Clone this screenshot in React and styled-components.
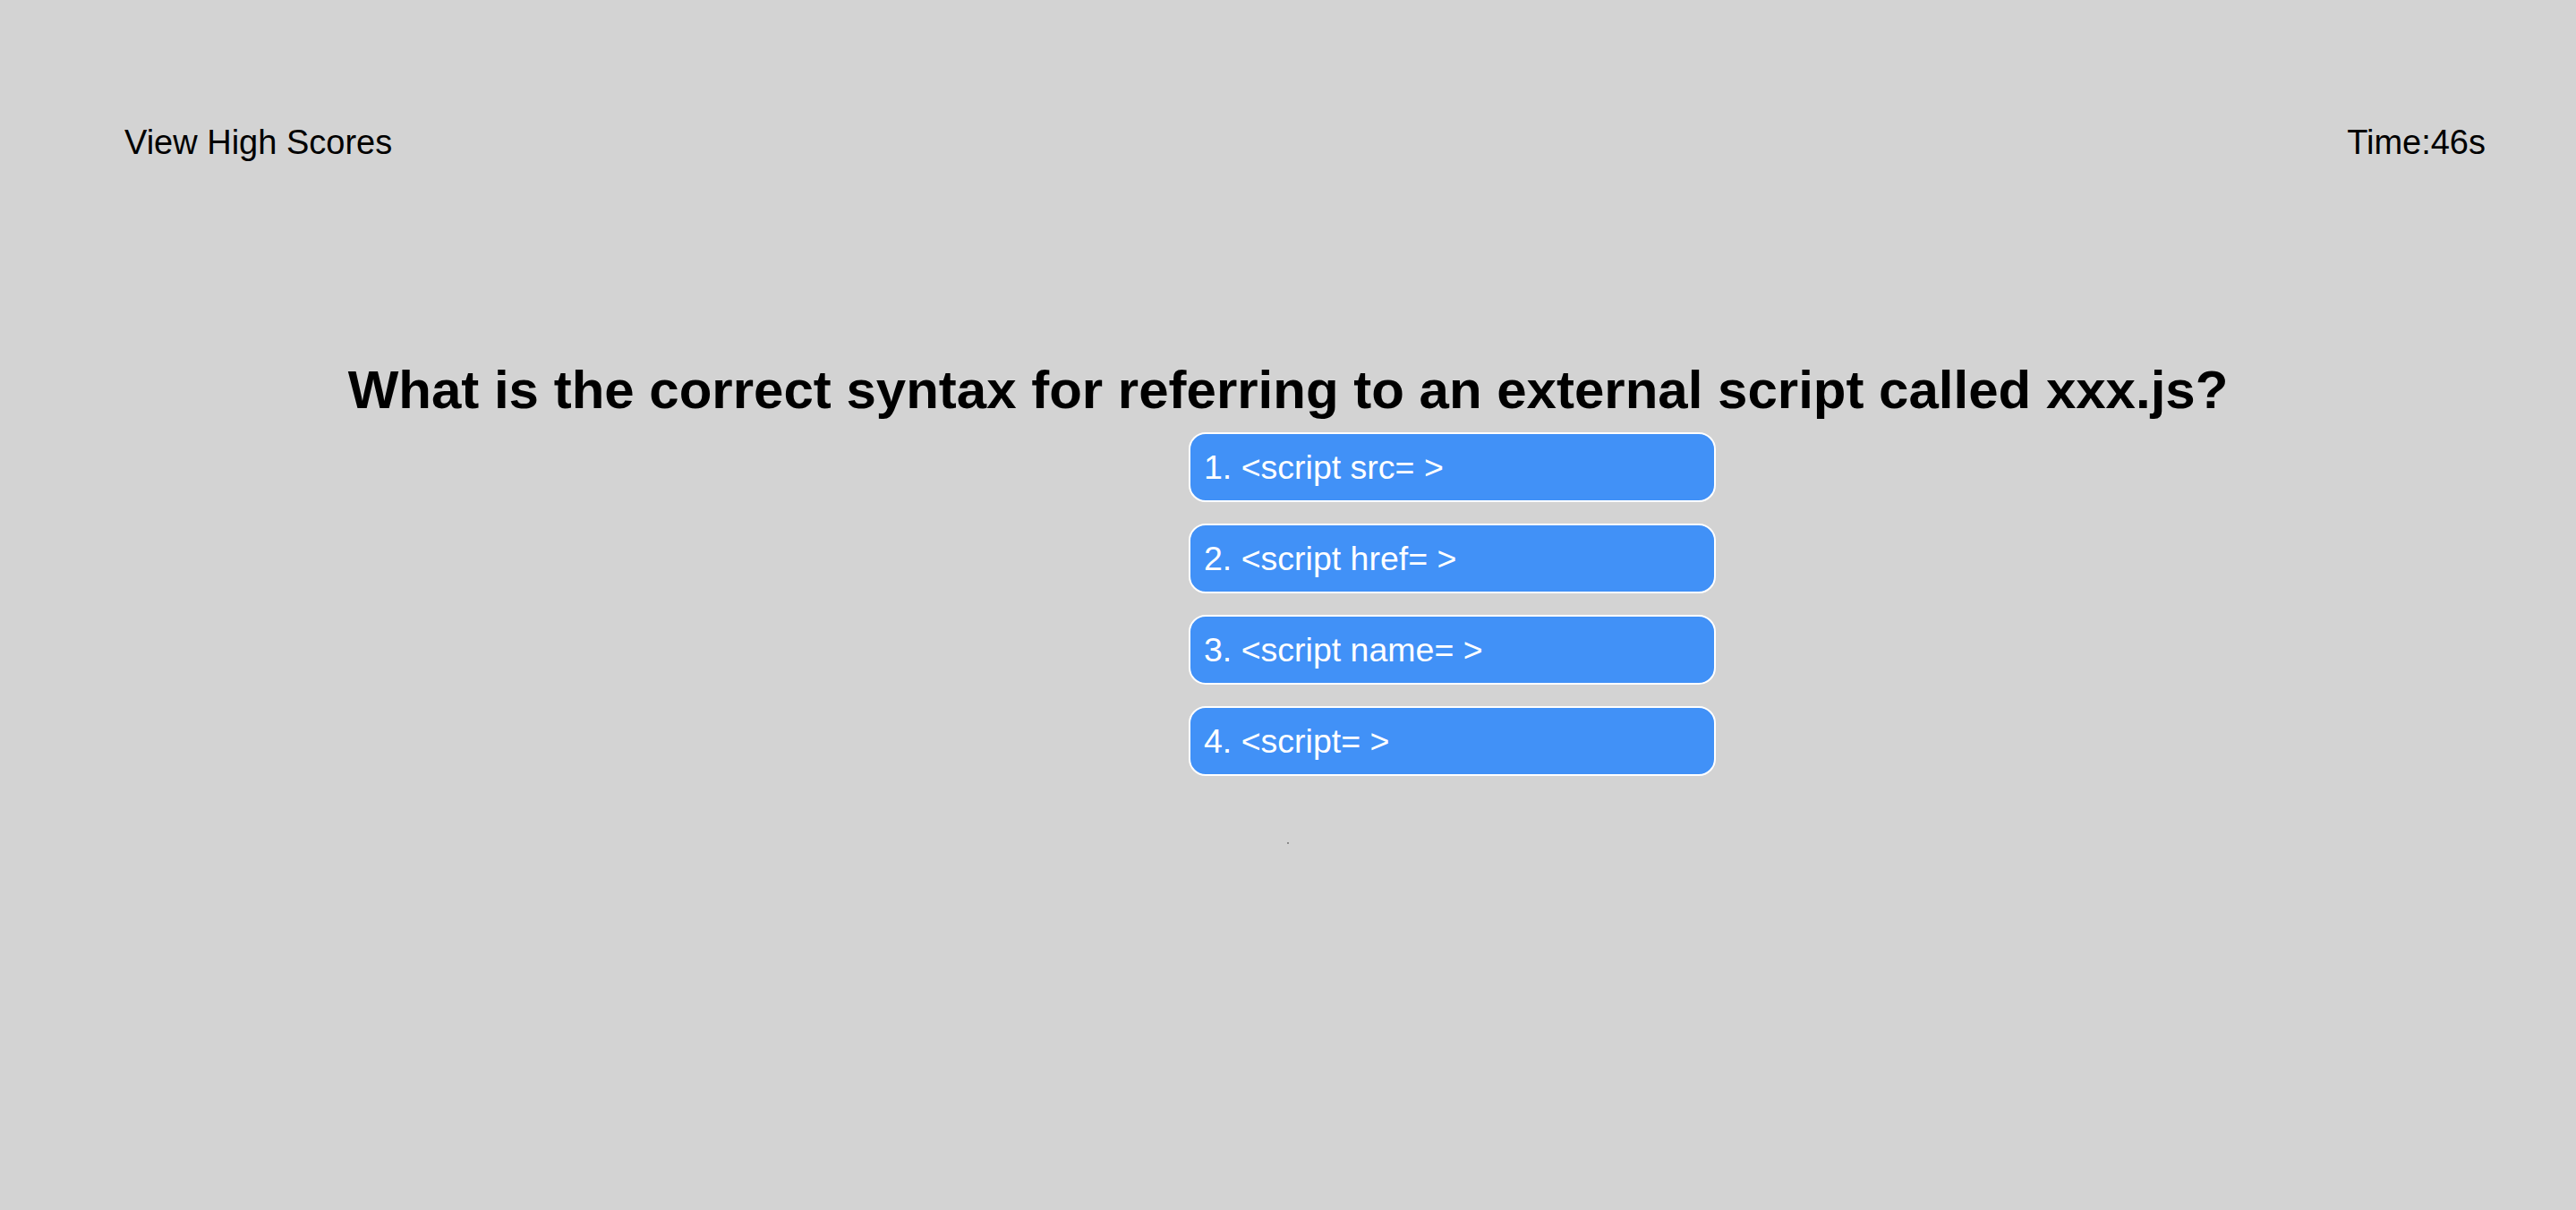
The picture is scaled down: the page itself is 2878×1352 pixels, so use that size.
import styled, { createGlobalStyle } from "styled-components";

const GlobalStyle = createGlobalStyle`
  html, body {
    margin: 0;
    padding: 0;
    background: #d3d3d3;
    font-family: "Liberation Sans", Arial, sans-serif;
    color: #000;
  }
`;

const Page = styled.div`
  min-height: 1352px;
  background: #d3d3d3;
`;

const Header = styled.header`
  display: flex;
  justify-content: space-between;
  align-items: flex-start;
  padding: 138px 101px 0 139px;
  font-size: 38px;
  line-height: 42px;
`;

const HeaderLink = styled.span`
  color: #000;
`;

const Timer = styled.span`
  color: #000;
`;

const Quiz = styled.main`
  display: flex;
  flex-direction: column;
  margin-top: 222px;
`;

const Question = styled.h1`
  margin: 0;
  text-align: center;
  font-size: 60px;
  line-height: 67px;
  font-weight: bold;
`;

const Choices = styled.ol`
  list-style: none;
  margin: 14px 0 0;
  padding: 0 0 0 calc(50% - 111px);
  display: flex;
  flex-direction: column;
  gap: 24px;
`;

const Choice = styled.button`
  display: flex;
  align-items: center;
  width: 589px;
  height: 78px;
  padding: 0 0 0 15px;
  background: #4191f7;
  border: 2px solid #fff;
  border-radius: 19px;
  color: #fff;
  font-family: "Liberation Sans", Arial, sans-serif;
  font-size: 37.5px;
  cursor: pointer;
`;

const Feedback = styled.div`
  width: 2px;
  height: 2px;
  margin: 74px auto 0;
  background: #8a8a8a;
`;

const choices = [
  "1. <script src= >",
  "2. <script href= >",
  "3. <script name= >",
  "4. <script= >",
];

export default function App() {
  return (
    <Page>
      <GlobalStyle />
      <Header>
        <HeaderLink>View High Scores</HeaderLink>
        <Timer>Time:46s</Timer>
      </Header>
      <Quiz>
        <Question>
          What is the correct syntax for referring to an external script called xxx.js?
        </Question>
        <Choices>
          {choices.map((c) => (
            <li key={c}>
              <Choice>{c}</Choice>
            </li>
          ))}
        </Choices>
        <Feedback />
      </Quiz>
    </Page>
  );
}
